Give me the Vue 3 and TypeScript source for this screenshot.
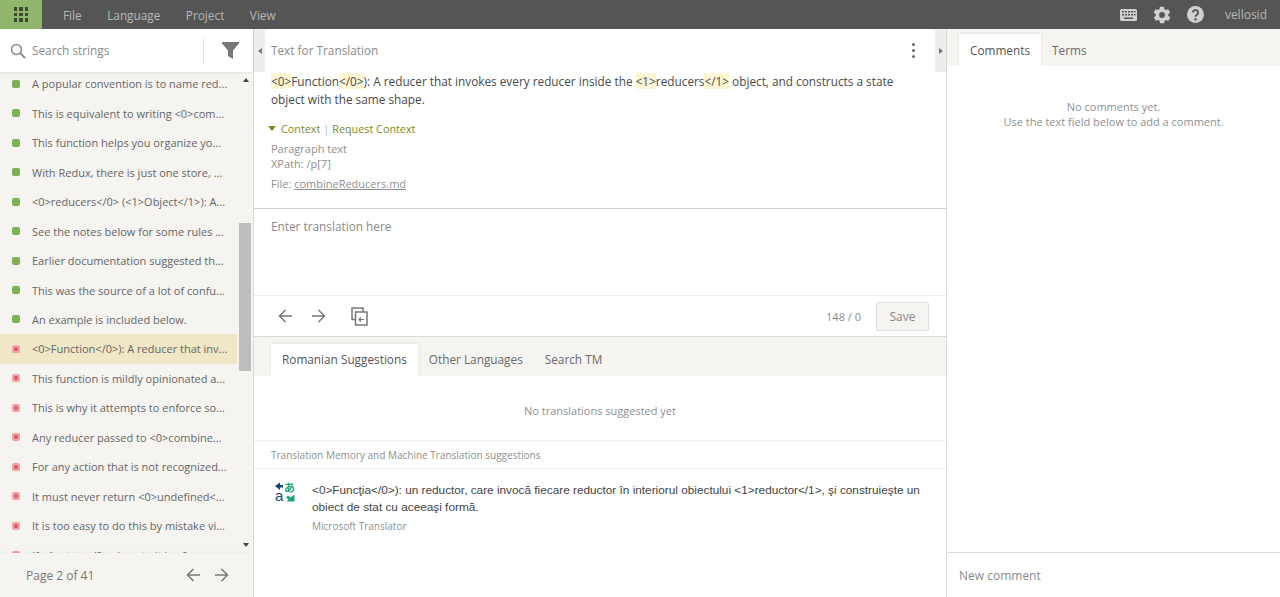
<script setup lang="ts">
interface Row { text: string; ok: boolean; active?: boolean }
const rows: Row[] = [
  { text: 'A popular convention is to name red...', ok: true },
  { text: 'This is equivalent to writing <0>com...', ok: true },
  { text: 'This function helps you organize yo...', ok: true },
  { text: 'With Redux, there is just one store, ...', ok: true },
  { text: '<0>reducers</0> (<1>Object</1>): A...', ok: true },
  { text: 'See the notes below for some rules ...', ok: true },
  { text: 'Earlier documentation suggested th...', ok: true },
  { text: 'This was the source of a lot of confu...', ok: true },
  { text: 'An example is included below.', ok: true },
  { text: '<0>Function</0>): A reducer that inv...', ok: false, active: true },
  { text: 'This function is mildly opinionated a...', ok: false },
  { text: 'This is why it attempts to enforce so...', ok: false },
  { text: 'Any reducer passed to <0>combine...', ok: false },
  { text: 'For any action that is not recognized...', ok: false },
  { text: 'It must never return <0>undefined<...', ok: false },
  { text: 'It is too easy to do this by mistake vi...', ok: false },
  { text: 'If <1>state</0> given to it is <0>...', ok: false },
]
const menus = ['File', 'Language', 'Project', 'View']
const dots = [0, 1, 2, 3, 4, 5, 6, 7, 8]
</script>

<template>
  <div class="app">
    <header class="topbar">
      <div class="grid-btn">
        <div class="dots"><i v-for="d in dots" :key="d"></i></div>
      </div>
      <nav class="menu"><span v-for="m in menus" :key="m">{{ m }}</span></nav>
      <div class="top-right">
        <svg width="17" height="12" viewBox="0 0 17 12"><rect width="17" height="12" rx="1.5" fill="#d0d0d0"/><g fill="#555"><rect x="2" y="2" width="2" height="1.5"/><rect x="5" y="2" width="2" height="1.5"/><rect x="8" y="2" width="2" height="1.5"/><rect x="11" y="2" width="2" height="1.5"/><rect x="14" y="2" width="1.5" height="1.5"/><rect x="2" y="5" width="2" height="1.5"/><rect x="5" y="5" width="2" height="1.5"/><rect x="8" y="5" width="2" height="1.5"/><rect x="11" y="5" width="2" height="1.5"/><rect x="14" y="5" width="1.5" height="1.5"/><rect x="4" y="8.5" width="9" height="1.5"/></g></svg>
        <svg class="gear" width="20" height="20" viewBox="0 0 24 24"><path fill="#d0d0d0" d="M19.4 13c.1-.3.1-.7.1-1s0-.7-.1-1l2.100-1.600c.2-.2.2-.4.1-.6l-2-3.500c-.1-.2-.4-.3-.6-.2l-2.500 1c-.5-.4-1.100-.7-1.700-1l-.4-2.600c0-.3-.2-.5-.5-.5h-4c-.3 0-.5.2-.5.4l-.4 2.700c-.6.2-1.200.6-1.700 1l-2.500-1c-.2-.1-.5 0-.6.2l-2 3.500c-.1.2-.1.5.1.600L4.600 11c0 .3-.1.7-.1 1s0 .7.1 1l-2.100 1.600c-.2.2-.2.4-.1.6l2 3.500c.1.2.4.3.6.2l2.500-1c.5.4 1.100.7 1.700 1l.4 2.600c0 .3.2.5.5.5h4c.3 0 .5-.2.5-.4l.4-2.700c.6-.2 1.200-.6 1.700-1l2.500 1c.2.1.5 0 .6-.2l2-3.500c.1-.2.1-.5-.1-.6zM12 15.500a3.500 3.500 0 1 1 0-7 3.500 3.500 0 0 1 0 7z"/></svg>
        <svg class="help" width="17" height="17" viewBox="0 0 17 17"><circle cx="8.500" cy="8.500" r="8.500" fill="#d0d0d0"/><path d="M5.800 6.500a2.700 2.500 0 1 1 4.200 2.100c-1 .7-1.500 1-1.500 2.200" fill="none" stroke="#555" stroke-width="1.900"/><circle cx="8.500" cy="13.300" r="1.200" fill="#555"/></svg>
        <span class="user">vellosid</span>
      </div>
    </header>

    <main class="body">
      <aside class="left">
        <div class="search">
          <svg class="search-ico" width="16" height="16" viewBox="0 0 16 16" fill="none" stroke="#8a8a8a" stroke-width="1.500"><circle cx="6.500" cy="6.500" r="5"/><path d="M10.200 10.200 15 15" stroke-width="1.800"/></svg>
          <span class="search-text">Search strings</span>
          <div class="search-sep"></div>
          <svg class="funnel" width="17" height="17" viewBox="0 0 17 17"><path fill="#777" d="M0 0h17v1.500l-6 7V17l-5-3V8.500l-6-7z"/></svg>
        </div>
        <div class="list-wrap">
          <div class="list">
            <div v-for="r in rows" :key="r.text" class="row" :class="{ active: r.active }">
              <span class="mark" :class="r.ok ? 'ok' : 'bad'"></span>
              <span class="row-text">{{ r.text }}</span>
            </div>
          </div>
          <div class="scroll">
            <span class="arrow up"></span>
            <div class="thumb"></div>
            <span class="arrow down"></span>
          </div>
        </div>
        <div class="pager">
          <span>Page 2 of 41</span>
          <div class="pager-arrows">
            <svg width="15" height="14" viewBox="0 0 15 14" fill="none" stroke="#777" stroke-width="1.500"><path d="M14 7H1.500M7.500 1 1.500 7l6 6"/></svg>
            <svg width="15" height="14" viewBox="0 0 15 14" fill="none" stroke="#777" stroke-width="1.500"><path d="M1 7h12.500M7.500 1l6 6-6 6"/></svg>
          </div>
        </div>
      </aside>

      <section class="center">
        <div class="head">
          <div class="collapse"><span class="tri-l"></span></div>
          <span class="head-title">Text for Translation</span>
          <div class="kebab"><i></i><i></i><i></i></div>
          <div class="collapse"><span class="tri-r"></span></div>
        </div>
        <div class="source">
          <p class="src-text"><mark>&lt;0&gt;</mark>Function<mark>&lt;/0&gt;</mark>): A reducer that invokes every reducer inside the <mark>&lt;1&gt;</mark>reducers<mark>&lt;/1&gt;</mark> object, and constructs a state object with the same shape.</p>
          <div class="ctx-links"><span class="tri-d"></span><span>Context</span><span class="bar">|</span><span>Request Context</span></div>
          <div class="ctx-info">Paragraph text<br>XPath: /p[7]</div>
          <div class="ctx-file">File: <u>combineReducers.md</u></div>
        </div>
        <div class="editor">Enter translation here</div>
        <div class="tools">
          <svg width="15" height="14" viewBox="0 0 15 14" fill="none" stroke="#777" stroke-width="1.500"><path d="M14 7H1.500M7.500 1 1.500 7l6 6"/></svg>
          <svg class="next" width="15" height="14" viewBox="0 0 15 14" fill="none" stroke="#777" stroke-width="1.500"><path d="M1 7h12.500M7.500 1l6 6-6 6"/></svg>
          <svg class="copy" width="17" height="19" viewBox="0 0 17 19" fill="none" stroke="#777" stroke-width="1.500"><path d="M4.500 12.500H1V1h11v4"/><path d="M4.500 5h11.500v13H4.500z"/><path d="M13 12.500H8M10 10.500l-2 2 2 2" stroke-width="1.200"/></svg>
          <span class="count">148 / 0</span>
          <button class="save">Save</button>
        </div>
        <div class="tabs sug-tabs">
          <span class="tab on">Romanian Suggestions</span>
          <span class="tab">Other Languages</span>
          <span class="tab">Search TM</span>
        </div>
        <div class="no-sug">No translations suggested yet</div>
        <div class="tm-title">Translation Memory and Machine Translation suggestions</div>
        <div class="tm">
          <svg class="ms" width="20" height="20" viewBox="0 0 20 20">
            <path fill="#0f4c6a" d="M0 4l5-3.500V3h3v2.500H5V8z"/>
            <text x="0" y="19" font-family="Liberation Sans, sans-serif" font-size="15" fill="#0f4c6a">a</text>
            <text x="9" y="10" font-family="Noto Sans CJK JP, sans-serif" font-size="11" font-weight="700" fill="#1fa672">あ</text>
            <path fill="#1fa672" d="M19.500 12.500v7H11.500l2-2-2.500-2 2-2 2.500 2z"/>
          </svg>
          <div class="tm-body">
            <p class="tm-text">&lt;0&gt;Funcţia&lt;/0&gt;): un reductor, care invocă fiecare reductor în interiorul obiectului &lt;1&gt;reductor&lt;/1&gt;, şi construieşte un obiect de stat cu aceeaşi formă.</p>
            <div class="tm-src">Microsoft Translator</div>
          </div>
        </div>
      </section>

      <aside class="right">
        <div class="tabs side-tabs">
          <span class="tab on">Comments</span>
          <span class="tab">Terms</span>
        </div>
        <div class="comments">
          <div>No comments yet.</div>
          <div>Use the text field below to add a comment.</div>
        </div>
        <div class="new-comment">New comment</div>
      </aside>
    </main>
  </div>
</template>

<style>
html, body { margin: 0; padding: 0; background: #fff; }
</style>

<style scoped>
.app {
  width: 1280px; height: 597px; overflow: hidden; display: flex; flex-direction: column;
  font-family: "Open Sans", sans-serif; font-size: 11.8px; color: #555; background: #fff;
}
.topbar { height: 29px; flex: none; background: #555; display: flex; align-items: center; color: #bdbdbd; }
.grid-btn { width: 42px; height: 29px; background: #90b66c; display: flex; align-items: center; justify-content: center; }
.dots { display: grid; grid-template-columns: repeat(3, 3.5px); gap: 2px; }
.dots i { width: 3.5px; height: 3.5px; background: #3f4a33; }
.menu { display: flex; gap: 25.5px; margin-left: 21px; font-size: 11.8px; color: #b8b8b8; }
.top-right { margin-left: auto; display: flex; align-items: center; padding-right: 13px; }
.gear { margin-left: 15px; }
.help { margin-left: 15px; }
.user { margin-left: 21px; color: #b8b8b8; font-size: 12px; }
.body { flex: 1; display: flex; min-height: 0; }

.left { width: 253px; flex: none; border-right: 1px solid #d9d9d9; display: flex; flex-direction: column; background: #f5f4f1; }
.search { height: 43px; flex: none; background: #fff; display: flex; align-items: center; padding-left: 10px; box-shadow: 0 1px 2px rgba(0,0,0,.08); position: relative; }
.search-text { margin-left: 6px; padding-bottom: 2px; color: #8a8a8a; font-size: 11.8px; }
.search-sep { margin-left: auto; width: 1px; height: 26px; background: #e6e6e6; }
.funnel { margin: 0 14px 0 18px; }
.list-wrap { flex: 1; min-height: 0; display: flex; overflow: hidden; }
.list { width: 237px; flex: none; margin-top: -3px; }
.row { height: 29.47px; display: flex; align-items: center; padding-left: 12px; color: #666; font-size: 11px; white-space: nowrap; box-sizing: border-box; overflow: hidden; }
.row.active { background: #efe7c6; }
.mark { width: 8px; height: 8px; border-radius: 2px; flex: none; margin-right: 12px; }
.mark.ok { background: #7cb055; }
.mark.bad { background-color: #f2a3a9; background-image: radial-gradient(circle, #dc5560 0 1.500px, transparent 2.500px); }
.scroll { flex: 1; display: flex; flex-direction: column; align-items: center; padding-top: 6px; }
.arrow { width: 0; height: 0; border-left: 3.500px solid transparent; border-right: 3.500px solid transparent; margin-left: 1px; }
.arrow.up { border-bottom: 4px solid #444; }
.arrow.down { border-top: 4px solid #444; margin-top: 172px; }
.thumb { width: 12px; height: 148px; background: #bdbdbd; margin: 141px 0 0 0; }
.pager { height: 44px; flex: none; display: flex; align-items: center; justify-content: space-between; padding: 0 24px 0 26px; color: #777; font-size: 12px; box-shadow: 0 -1px 2px rgba(0,0,0,.04); position: relative; background: #f5f4f1; }
.pager-arrows { display: flex; gap: 13px; }

.center { width: 692px; flex: none; display: flex; flex-direction: column; border-right: 1px solid #d9d9d9; }
.head { height: 43px; flex: none; display: flex; align-items: center; }
.collapse { width: 11px; height: 43px; background: #ededed; display: flex; align-items: center; justify-content: center; flex: none; }
.tri-l { border-top: 3.500px solid transparent; border-bottom: 3.500px solid transparent; border-right: 4px solid #777; }
.tri-r { border-top: 3.500px solid transparent; border-bottom: 3.500px solid transparent; border-left: 4px solid #777; }
.head-title { margin-left: 6px; padding-bottom: 2px; font-size: 11.8px; color: #8a8a8a; }
.kebab { margin-left: auto; margin-right: 20px; display: flex; flex-direction: column; gap: 2.500px; }
.kebab i { width: 3.500px; height: 3.500px; border-radius: 50%; background: #666; }
.source { height: 137px; flex: none; padding: 0 17px; box-sizing: border-box; border-bottom: 1px solid #cfcfcf; }
.src-text { margin: 0; font-size: 11.8px; line-height: 18px; color: #4a4a4a; }
mark { background: #fdf6d2; color: inherit; }
.ctx-links { margin-top: 11px; display: flex; align-items: center; color: #7c8a1e; font-size: 10.8px; height: 18px; margin-left: -3px; }
.tri-d { border-left: 4px solid transparent; border-right: 4px solid transparent; border-top: 5px solid #7c8a1e; margin-right: 5px; }
.bar { margin: 0 3px; color: #bbb; }
.ctx-info { margin-top: 5px; font-size: 11px; line-height: 14.500px; color: #8f8f8f; }
.ctx-file { margin-top: 5px; font-size: 11px; line-height: 15px; color: #8f8f8f; }
.editor { height: 87px; flex: none; box-sizing: border-box; padding: 9px 17px; color: #8a8a8a; font-size: 11.8px; border-bottom: 1px solid #eee; }
.tools { height: 41px; flex: none; box-sizing: border-box; display: flex; align-items: center; padding: 0 17px 0 24px; border-bottom: 1px solid #d9d9d9; }
.next { margin-left: 18px; }
.copy { margin-left: 25px; }
.count { margin-left: auto; font-size: 11px; color: #8a8a8a; }
.save { margin-left: 15px; width: 53px; height: 29px; border: 1px solid #ddd; background: #f5f4f1; color: #8a8a8a; font: 12px "Open Sans", sans-serif; border-radius: 2px; padding: 0; }

.tabs { display: flex; background: #f5f4f1; align-items: flex-end; flex: none; }
.tab { height: 32px; display: flex; align-items: center; padding: 0 11px; font-size: 11.8px; color: #6a6a6a; white-space: nowrap; }
.tab.on { background: #fff; box-shadow: 0 -1px 3px rgba(0,0,0,.08); color: #555; }
.sug-tabs { height: 39px; padding-left: 17px; }
.sug-tabs .tab { box-sizing: border-box; padding-bottom: 2px; }
.sug-tabs .tab + .tab { padding: 0 0 2px 11px; margin-right: 11px; }
.no-sug { height: 65px; flex: none; display: flex; align-items: center; justify-content: center; box-sizing: border-box; padding-top: 5px; font-size: 11px; color: #8f8f8f; border-bottom: 1px solid #f0f0f0; }
.tm-title { height: 28px; flex: none; box-sizing: border-box; display: flex; align-items: center; padding-left: 17px; font-size: 10px; color: #8f8f8f; border-bottom: 1px solid #eee; }
.tm { display: flex; padding: 13px 17px 0 21px; }
.ms { flex: none; margin-top: 0; }
.tm-body { margin-left: 17px; }
.tm-text { margin: 0; font-family: "Liberation Sans", sans-serif; font-size: 11.8px; line-height: 17px; color: #444; }
.tm-src { font-size: 10px; color: #8f8f8f; margin-top: 3px; }

.right { flex: 1; min-width: 0; display: flex; flex-direction: column; }
.side-tabs { height: 37px; padding-left: 12px; }
.side-tabs .tab { height: 32px; }
.comments { flex: 1; text-align: center; padding-top: 33px; font-size: 11px; line-height: 15px; color: #8f8f8f; }
.new-comment { height: 45px; flex: none; box-sizing: border-box; border-top: 1px solid #ddd; display: flex; align-items: center; padding-left: 12px; color: #8a8a8a; font-size: 12px; }
</style>
